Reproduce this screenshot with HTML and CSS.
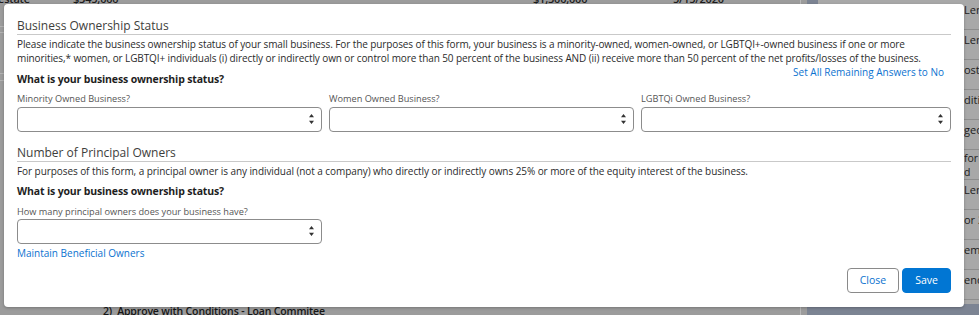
FILE: index.html
```html
<!DOCTYPE html>
<html lang="en">
<head>
<meta charset="utf-8">
<title>Business Ownership Status</title>
<link rel="stylesheet" href="styles.css">
</head>
<body>
<div class="page">
  <div class="main">
    <div class="bg-row">
      <span>estate</span><span>$345,000</span><span>$1,300,000</span><span>5/15/2020</span>
    </div>
    <div class="bg-lines">
      <div class="bg-line l1"></div>
      <div class="bg-line l2"></div>
      <div class="bg-line l3"></div>
      <div class="bg-line l4"></div>
    </div>
    <div class="bg-bottom">2)&nbsp; Approve with Conditions - Loan Commitee</div>
  </div>
  <div class="rule"></div>
  <div class="side">
    <div class="card">
      <div class="cell">Lender</div>
      <div class="cell">Lender</div>
      <div class="cell">ost</div>
      <div class="cell">ditional</div>
      <div class="cell">ged</div>
      <div class="cell cell-wrap">for<br>d</div>
      <div class="cell">Lender</div>
      <div class="cell">or 2</div>
      <div class="cell">em</div>
      <div class="cell">end</div>
    </div>
  </div>
</div>

<section class="modal" role="dialog" aria-label="Business Ownership Status">
  <h2 class="sec-title">Business Ownership Status</h2>
  <p class="sec-text">Please indicate the business ownership status of your small business. For the purposes of this form, your business is a minority-owned, women-owned, or LGBTQI+-owned business if one or more minorities,* women, or LGBTQI+ individuals (i) directly or indirectly own or control more than 50 percent of the business AND (ii) receive more than 50 percent of the net profits/losses of the business.</p>
  <div class="q-row">
    <h3 class="question q-bottom">What is your business ownership status?</h3>
    <a class="link link-top" href="#">Set All Remaining Answers to No</a>
  </div>
  <div class="fields">
    <div class="field">
      <label class="field-label">Minority Owned Business?</label>
      <div class="select"><svg class="spin" width="5" height="10" viewBox="0 0 5 10"><path d="M0 3.2 L2.5 0 L5 3.2 Z M0 6.8 L5 6.8 L2.5 10 Z" fill="#333"/></svg></div>
    </div>
    <div class="field">
      <label class="field-label">Women Owned Business?</label>
      <div class="select"><svg class="spin" width="5" height="10" viewBox="0 0 5 10"><path d="M0 3.2 L2.5 0 L5 3.2 Z M0 6.8 L5 6.8 L2.5 10 Z" fill="#333"/></svg></div>
    </div>
    <div class="field">
      <label class="field-label">LGBTQi Owned Business?</label>
      <div class="select"><svg class="spin" width="5" height="10" viewBox="0 0 5 10"><path d="M0 3.2 L2.5 0 L5 3.2 Z M0 6.8 L5 6.8 L2.5 10 Z" fill="#333"/></svg></div>
    </div>
  </div>

  <h2 class="sec-title sec-title-2">Number of Principal Owners</h2>
  <p class="sec-text sec-text-2">For purposes of this form, a principal owner is any individual (not a company) who directly or indirectly owns 25% or more of the equity interest of the business.</p>
  <h3 class="question question-2">What is your business ownership status?</h3>
  <div class="field field-single">
    <label class="field-label field-label-tight">How many principal owners does your business have?</label>
    <div class="select"><svg class="spin" width="5" height="10" viewBox="0 0 5 10"><path d="M0 3.2 L2.5 0 L5 3.2 Z M0 6.8 L5 6.8 L2.5 10 Z" fill="#333"/></svg></div>
  </div>
  <a class="link link-block" href="#">Maintain Beneficial Owners</a>

  <div class="footer">
    <button class="btn btn-neutral" type="button">Close</button>
    <button class="btn btn-brand" type="button">Save</button>
  </div>
</section>
</body>
</html>
```

FILE: styles.css
```css
* { box-sizing: border-box; }

html, body {
  margin: 0;
  padding: 0;
}

body {
  width: 979px;
  height: 315px;
  overflow: hidden;
  position: relative;
  font-family: "Open Sans", "Noto Sans", sans-serif;
  background: #9c9c9c;
}

/* ---------- dimmed background page ---------- */
.page {
  display: flex;
  height: 315px;
  overflow: hidden;
}

.main {
  width: 800px;
  flex: none;
  display: flex;
  flex-direction: column;
  overflow: hidden;
  background: #9c9c9c;
}

.bg-row {
  display: grid;
  grid-template-columns: 75px 460px 140px auto;
  margin-top: -8px;
  margin-left: -2px;
  font-size: 11px;
  line-height: 14px;
  color: #1c1c1c;
  font-weight: 600;
  letter-spacing: -0.2px;
}

.bg-lines {
  display: flex;
  flex-direction: column;
}

.bg-line {
  height: 1px;
  background: #b3b3b3;
  width: 12px;
}
.l1 { margin-top: 20px; }
.l2 { margin-top: 5px; }
.l3 { margin-top: 40px; }
.l4 { margin-top: 6px; }

.bg-bottom {
  margin-top: auto;
  margin-bottom: -3px;
  padding-left: 103px;
  font-size: 10.5px;
  line-height: 14px;
  font-weight: 600;
  letter-spacing: -0.15px;
  color: #161616;
}

.rule {
  width: 1px;
  flex: none;
  background: #b9b9b9;
}

.side {
  flex: 1;
  margin-left: 6px;
  padding-left: 11px;
  background: #7c8493;
}

.card {
  height: 304px;
  background: #a8a8a8;
}

.cell {
  height: 30px;
  border-bottom: 1px solid #8d8d8d;
  padding: 3px 0 0 146px;
  font-size: 11px;
  line-height: 14px;
  color: #1c1c1c;
  white-space: nowrap;
  overflow: hidden;
}

.cell-wrap {
  padding-top: 1px;
  font-size: 10.5px;
  line-height: 14px;
}

/* ---------- modal ---------- */
.modal {
  position: absolute;
  left: 4px;
  top: 4px;
  width: 960px;
  height: 303px;
  padding: 13px 13px 14px 13px;
  background: #ffffff;
  border-radius: 4px;
  box-shadow: 0 1px 3px rgba(0, 0, 0, 0.25);
  display: flex;
  flex-direction: column;
  align-items: stretch;
  color: #2b2b2b;
}

.sec-title {
  margin: 0;
  font-size: 12px;
  line-height: 17px;
  font-weight: 400;
  color: #3e3e3c;
  border-bottom: 1px solid #c9c9c9;
}

.sec-title-2 {
  margin-top: 12px;
}

.sec-text {
  margin: 2px 0 0 0;
  font-size: 10px;
  line-height: 14px;
  letter-spacing: -0.1px;
  color: #2b2b2b;
}

.sec-text-2 {
  letter-spacing: -0.07px;
}

.q-row {
  display: flex;
  justify-content: space-between;
  height: 21px;
}

.question {
  margin: 0;
  font-size: 10.5px;
  line-height: 14px;
  font-weight: 700;
  letter-spacing: -0.15px;
  color: #1e1e1e;
}

.q-bottom {
  align-self: flex-end;
}

.question-2 {
  margin-top: 6px;
  align-self: flex-start;
}

.link {
  font-size: 10px;
  line-height: 14px;
  color: #0b72cf;
  text-decoration: none;
}

.link-top {
  align-self: flex-start;
  margin-right: 7px;
}

.link-block {
  display: block;
  margin-top: 2px;
  align-self: flex-start;
}

.fields {
  display: grid;
  grid-template-columns: 305px 305px 310px;
  justify-content: space-between;
  margin-top: 6px;
}

.field {
  display: flex;
  flex-direction: column;
}

.field-single {
  width: 305px;
  margin-top: 7px;
}

.field-label {
  font-size: 9.2px;
  line-height: 13px;
  color: #555555;
  margin-bottom: 2px;
}

.field-label-tight {
  margin-bottom: 1px;
}

.select {
  height: 25px;
  border: 1px solid #8c8c8c;
  border-radius: 4px;
  background: #ffffff;
  display: flex;
  justify-content: flex-end;
  align-items: center;
  padding: 0 7px 2px 0;
}

.spin {
  display: block;
}

.footer {
  margin-top: auto;
  display: flex;
  justify-content: flex-end;
  gap: 3px;
}

.btn {
  height: 25px;
  padding: 0;
  border-radius: 4px;
  font-family: "Open Sans", "Noto Sans", sans-serif;
  font-size: 10.5px;
  line-height: 23px;
  text-align: center;
  cursor: pointer;
}

.btn-neutral {
  width: 52px;
  background: #ffffff;
  border: 1px solid #8a8a8a;
  color: #0b72cf;
}

.btn-brand {
  width: 49px;
  background: #0176d3;
  border: 1px solid #0176d3;
  color: #ffffff;
}
```
